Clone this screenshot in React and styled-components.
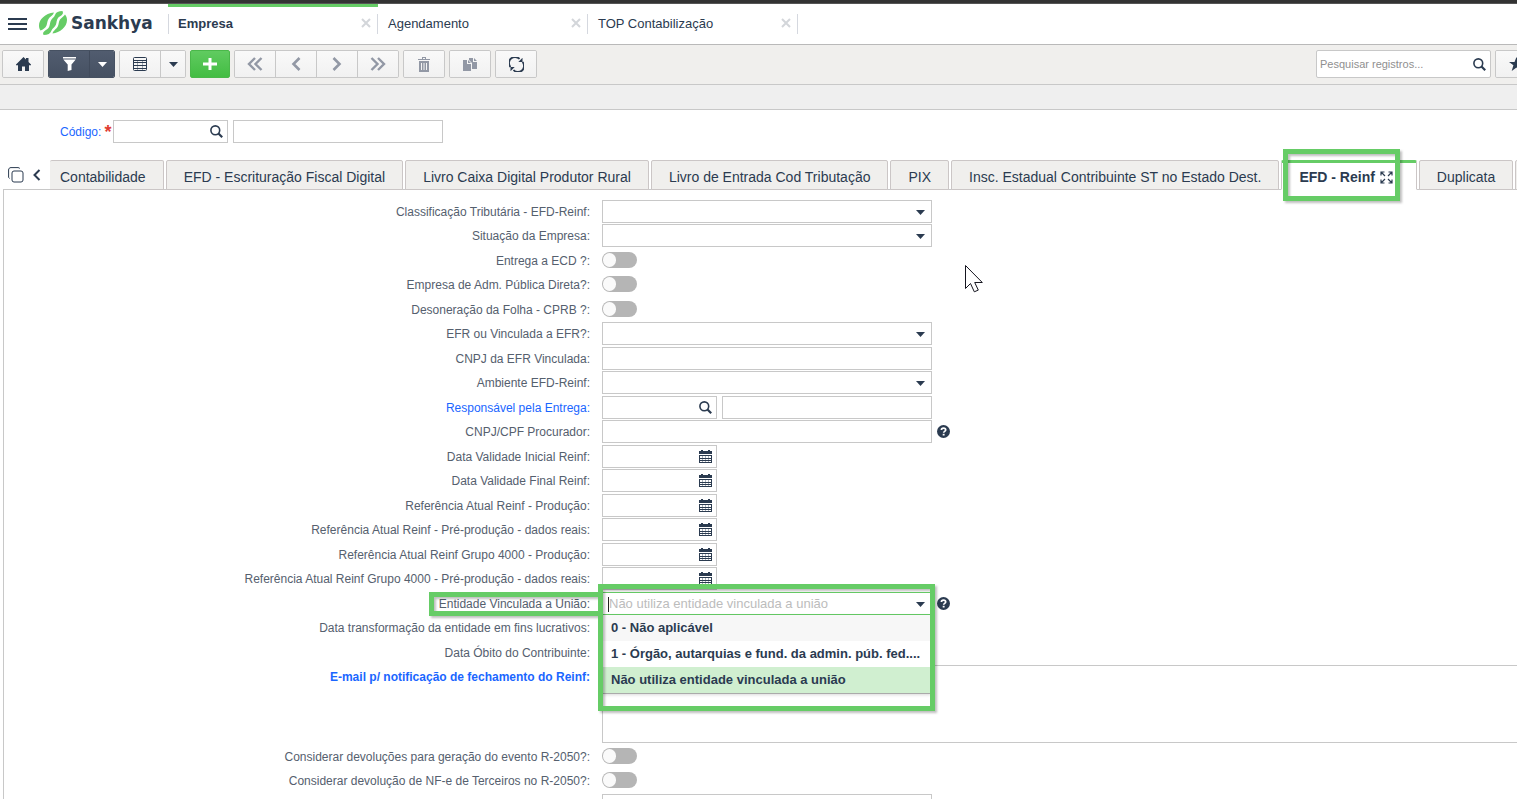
import { useState } from "react";
import styled, { createGlobalStyle, css } from "styled-components";

const NAVY = "#2b3b50";
const GREEN = "#66cc66";
const BORDER = "#c8c8c8";

const GlobalStyle = createGlobalStyle`
  * {
    box-sizing: border-box;
  }
  body {
    margin: 0;
    background-color: white;
    color: ${NAVY};
    font-family: "Liberation Sans", Arial, sans-serif;
    font-size: 12px;
  }
  button, input, select, textarea {
    font-family: inherit;
    color: inherit;
    margin: 0;
  }
`;

/* ---------- icons ---------- */

const Icon = ({ w, h, children }) => (
  <svg
    width={w}
    height={h}
    viewBox={`0 0 ${w} ${h}`}
    fill="currentColor"
    aria-hidden="true"
  >
    {children}
  </svg>
);

const MenuIcon = () => (
  <Icon w={19} h={12}>
    <path d="M0 0h19v2H0zM0 5h19v2H0zM0 10h19v2H0z" />
  </Icon>
);

const LogoMark = () => (
  <svg width="28" height="24" viewBox="0 0 28 24" fill={GREEN} aria-hidden="true">
    <path d="M15 1.5C6 2.500 0 8.500 0 14.500c0 2 .5 3.600 1.500 5 2.500-1 5-2.500 6-5 1-2.500.5-4 2-6.500C11 5.500 14 4.500 15 1.500z" />
    <path d="M23.500 0C19.500 0 17 1 16 4c-.8 2.500-3.500 3.500-4.500 6.500-.8 2.500-.5 4.500-2 6.500-1.500 2-4.500 2.500-5.500 5l.5 2C9 24 11.500 22.500 12.500 19.500c.8-2.500 3.500-3 4.500-6 .8-2.500.5-4.500 2-6.500 1.500-2 4.500-2.500 5-5z" />
    <path d="M26 3.500c-1 2-3.500 3-5 5-1.300 2-1 4-2 6.500-1.200 3-4.500 4-5.500 7.500C21 21.500 28 16 28 9c0-2-.7-4-2-5.500z" />
  </svg>
);

const CloseIcon = () => (
  <Icon w={10} h={10}>
    <path d="M1 1l8 8M9 1l-8 8" stroke="currentColor" strokeWidth="2" />
  </Icon>
);

const HomeIcon = () => (
  <Icon w={15} h={14}>
    <path d="M7.500 0L10 2.400V1h2.500v3.900L15 7.400v.9h-2V14H9V9.500H6V14H2V8.300H0v-.9z" />
  </Icon>
);

const FilterIcon = () => (
  <Icon w={13} h={14}>
    <path d="M0 0h13v1.500H0zM.3 2.500h12.400L8.500 7.500v5.500L4.700 14V7.500z" />
  </Icon>
);

const CaretIcon = () => (
  <Icon w={9} h={5}>
    <path d="M0 0h9L4.500 5z" />
  </Icon>
);

const GridIcon = () => (
  <Icon w={14} h={14}>
    <rect x=".5" y=".5" width="13" height="13" rx="1" fill="none" stroke="currentColor" />
    <path d="M1 3h12v1H1zM1 5h12v1H1zM1 8h12v1H1zM1 11h12v1H1z" />
    <path d="M4 4h1v9H4zM9 4h1v9H9z" opacity=".4" />
  </Icon>
);

const PlusIcon = () => (
  <Icon w={14} h={12}>
    <path d="M5.500 0h3v4.500H14v3H8.500V12h-3V7.500H0v-3h5.500z" />
  </Icon>
);

const DoubleChevron = () => (
  <Icon w={16} h={14}>
    <path
      d="M8 1L2 7l6 6M14.500 1l-6 6 6 6"
      fill="none"
      stroke="currentColor"
      strokeWidth="2.400"
    />
  </Icon>
);

const Chevron = () => (
  <Icon w={10} h={14}>
    <path d="M8.500 1l-6 6 6 6" fill="none" stroke="currentColor" strokeWidth="2.600" />
  </Icon>
);

const SmallChevron = () => (
  <Icon w={8} h={12}>
    <path d="M6.500 1l-5 5 5 5" fill="none" stroke="currentColor" strokeWidth="2" />
  </Icon>
);

const TrashIcon = () => (
  <Icon w={12} h={15}>
    <path d="M0 2h12v1H0zM4 0h4v2H7V1H5v1H4z" />
    <path
      fillRule="evenodd"
      d="M1 4h10v11H1zM3 6v7h1V6zM5.500 6v7h1V6zM8 6v7h1V6z"
    />
  </Icon>
);

const CopyIcon = () => (
  <Icon w={14} h={13}>
    <path d="M0 2h4v4h4v7H0zM5 2l3 3H5z" />
    <path d="M6 0h4v4h4v7H9V5L6 2zM11 0l3 3h-3z" />
  </Icon>
);

const RefreshIcon = () => (
  <Icon w={15} h={15}>
    <path
      d="M1.500 10A6 6 0 0 1 10.500 2M13.500 5A6 6 0 0 1 4.500 13"
      fill="none"
      stroke="currentColor"
      strokeWidth="1.800"
    />
    <path d="M13.500.8V5H9.300zM1.500 14.200V10h4.200z" />
  </Icon>
);

const SearchIcon = () => (
  <Icon w={13} h={13}>
    <circle cx="5.300" cy="5.300" r="4.400" fill="none" stroke="currentColor" strokeWidth="1.600" />
    <path d="M8.500 8.500l3.700 3.700" stroke="currentColor" strokeWidth="2.200" />
  </Icon>
);

const StarIcon = () => (
  <Icon w={15} h={14}>
    <path d="M7.500 0l2 5H15l-4.400 3.300L12.300 14 7.500 10.600 2.700 14l1.700-5.700L0 5h5.500z" />
  </Icon>
);

const CalendarIcon = () => (
  <Icon w={13} h={13}>
    <path d="M0 1h2V0h2v1h5V0h2v1h2v3H0z" />
    <path d="M0 5h13v1H0zM0 8h13v1H0zM0 10h13v1H0zM0 12h13v1H0z" />
    <path d="M0 5h1v8H0zM12 5h1v8h-1z" />
    <path d="M3 5h1v8H3zM6 5h1v8H6zM9 5h1v8H9z" opacity=".4" />
  </Icon>
);

const HelpIcon = () => (
  <Icon w={13} h={13}>
    <circle cx="6.500" cy="6.500" r="6.500" />
    <path
      d="M4.400 5.100c0-1.300 1-1.900 2.100-1.900s2.200.6 2.200 1.800c0 1.400-2 1.400-2 2.700"
      fill="none"
      stroke="white"
      strokeWidth="1.700"
    />
    <path d="M5.700 8.800h1.900v1.700H5.700z" fill="white" />
  </Icon>
);

const ExpandIcon = () => (
  <Icon w={13} h={13}>
    <path
      d="M1 4.500V1h3.500M8.500 1H12v3.500M12 8.500V12H8.500M4.500 12H1V8.500M1.500 1.500L5 5M11.500 1.500L8 5M11.500 11.500L8 8M1.500 11.500L5 8"
      fill="none"
      stroke="currentColor"
      strokeWidth="1.200"
    />
  </Icon>
);

const WindowsIcon = () => (
  <Icon w={16} h={16}>
    <rect x="4" y="4" width="11" height="11" rx="2" fill="none" stroke="currentColor" />
    <path
      d="M1.500 11.500C.9 11 .6 10.600.6 10V3C.6 1.500 1.500.6 3 .6h7c.9 0 1.500.4 1.900 1"
      fill="none"
      stroke="currentColor"
    />
  </Icon>
);

const PointerIcon = () => (
  <svg width="19" height="28" viewBox="0 0 19 28" aria-hidden="true">
    <path
      d="M.5.5v23l5-5 3.800 8.300 4-1.700-3.600-7.600h7.600z"
      fill="white"
      stroke="#15151f"
    />
  </svg>
);

/* ---------- data ---------- */

const windows = ["Empresa", "Agendamento", "TOP Contabilização"];

const tabs = [
  "Contabilidade",
  "EFD - Escrituração Fiscal Digital",
  "Livro Caixa Digital Produtor Rural",
  "Livro de Entrada Cod Tributação",
  "PIX",
  "Insc. Estadual Contribuinte ST no Estado Dest.",
  "EFD - Reinf",
  "Duplicata",
];

const options = [
  "0 - Não aplicável",
  "1 - Órgão, autarquias e fund. da admin. púb. fed....",
  "Não utiliza entidade vinculada a união",
];

const fields = [
  { id: "classtrib", label: "Classificação Tributária - EFD-Reinf:", type: "select" },
  { id: "situacao", label: "Situação da Empresa:", type: "select" },
  { id: "ecd", label: "Entrega a ECD ?:", type: "toggle" },
  { id: "admpub", label: "Empresa de Adm. Pública Direta?:", type: "toggle" },
  { id: "cprb", label: "Desoneração da Folha - CPRB ?:", type: "toggle" },
  { id: "efr", label: "EFR ou Vinculada a EFR?:", type: "select" },
  { id: "cnpjefr", label: "CNPJ da EFR Vinculada:", type: "text" },
  { id: "ambiente", label: "Ambiente EFD-Reinf:", type: "select" },
  { id: "resp", label: "Responsável pela Entrega:", type: "lookup", link: true },
  { id: "procurador", label: "CNPJ/CPF Procurador:", type: "text", help: true },
  { id: "valini", label: "Data Validade Inicial Reinf:", type: "date" },
  { id: "valfim", label: "Data Validade Final Reinf:", type: "date" },
  { id: "refprod", label: "Referência Atual Reinf - Produção:", type: "date" },
  { id: "refpre", label: "Referência Atual Reinf - Pré-produção - dados reais:", type: "date" },
  { id: "ref4prod", label: "Referência Atual Reinf Grupo 4000 - Produção:", type: "date" },
  { id: "ref4pre", label: "Referência Atual Reinf Grupo 4000 - Pré-produção - dados reais:", type: "date" },
  { id: "entidade", label: "Entidade Vinculada a União:", type: "combo", help: true, marked: true },
  { id: "transf", label: "Data transformação da entidade em fins lucrativos:", type: "date" },
  { id: "obito", label: "Data Óbito do Contribuinte:", type: "date" },
  { id: "email", label: "E-mail p/ notificação de fechamento do Reinf:", type: "area", link: true, strong: true },
  { id: "dev2050", label: "Considerar devoluções para geração do evento R-2050?:", type: "toggle" },
  { id: "nfe2050", label: "Considerar devolução de NF-e de Terceiros no R-2050?:", type: "toggle" },
  { id: "outro", label: "", type: "text" },
];

/* ---------- components ---------- */

const Lookup = ({ id, name }) => (
  <>
    <FieldBox $short>
      <TextInput id={id} />
      <IconButton aria-label="Pesquisar">
        <SearchIcon />
      </IconButton>
    </FieldBox>
    <FieldBox $medium>
      <TextInput aria-label={name} />
    </FieldBox>
  </>
);

const Combo = ({ id }) => {
  const [selected, setSelected] = useState(2);
  return (
    <FieldBox $open>
      <TextInput id={id} role="combobox" aria-expanded="true" placeholder={options[selected]} />
      <TextCaret />
      <SelectArrow>
        <CaretIcon />
      </SelectArrow>
      <OptionList role="listbox">
        {options.map((option, i) => (
          <Option
            key={option}
            role="option"
            aria-selected={i === selected}
            $hovered={i === 0}
            $selected={i === selected}
            onClick={() => setSelected(i)}
          >
            {option}
          </Option>
        ))}
      </OptionList>
      <ComboMarker />
    </FieldBox>
  );
};

const Control = ({ field }) => {
  const { id, label, type } = field;
  switch (type) {
    case "select":
      return (
        <FieldBox>
          <Select id={id}>
            <option value="" />
          </Select>
          <SelectArrow>
            <CaretIcon />
          </SelectArrow>
        </FieldBox>
      );
    case "toggle":
      return <Toggle id={id} type="checkbox" />;
    case "lookup":
      return <Lookup id={id} name={label} />;
    case "date":
      return (
        <FieldBox $short>
          <TextInput id={id} />
          <IconButton aria-label="Abrir calendário">
            <CalendarIcon />
          </IconButton>
        </FieldBox>
      );
    case "combo":
      return <Combo id={id} />;
    case "area":
      return <TextArea id={id} />;
    default:
      return (
        <FieldBox>
          <TextInput id={id} aria-label={label || "Campo"} />
        </FieldBox>
      );
  }
};

const App = () => {
  const [activeTab, setActiveTab] = useState("EFD - Reinf");

  return (
    <Page>
      <GlobalStyle />
      <TitleBar />
      <Header>
        <MenuButton aria-label="Menu">
          <MenuIcon />
        </MenuButton>
        <Logo href="#">
          <LogoMark />
          Sankhya
        </Logo>
        <WindowTabs>
          {windows.map((name, i) => (
            <WindowTab key={name} $active={i === 0}>
              <WindowName $active={i === 0}>{name}</WindowName>
              <CloseButton aria-label={`Fechar ${name}`}>
                <CloseIcon />
              </CloseButton>
            </WindowTab>
          ))}
        </WindowTabs>
      </Header>

      <Toolbar>
        <Group>
          <ToolButton aria-label="Início">
            <HomeIcon />
          </ToolButton>
        </Group>
        <Group $dark>
          <ToolButton $dark aria-label="Filtro">
            <FilterIcon />
          </ToolButton>
          <ToolButton $dark $narrow aria-label="Opções de filtro">
            <CaretIcon />
          </ToolButton>
        </Group>
        <Group>
          <ToolButton aria-label="Modo grade">
            <GridIcon />
          </ToolButton>
          <ToolButton $narrow aria-label="Opções da grade">
            <CaretIcon />
          </ToolButton>
        </Group>
        <AddButton aria-label="Adicionar">
          <PlusIcon />
        </AddButton>
        <Group>
          <ToolButton $muted aria-label="Primeiro">
            <DoubleChevron />
          </ToolButton>
          <ToolButton $muted aria-label="Anterior">
            <Chevron />
          </ToolButton>
          <ToolButton $muted $flip aria-label="Próximo">
            <Chevron />
          </ToolButton>
          <ToolButton $muted $flip aria-label="Último">
            <DoubleChevron />
          </ToolButton>
        </Group>
        <Group>
          <ToolButton $muted aria-label="Excluir">
            <TrashIcon />
          </ToolButton>
        </Group>
        <Group>
          <ToolButton $muted aria-label="Duplicar">
            <CopyIcon />
          </ToolButton>
        </Group>
        <Group>
          <ToolButton aria-label="Atualizar">
            <RefreshIcon />
          </ToolButton>
        </Group>
        <ToolbarEnd>
          <SearchBox>
            <SearchInput aria-label="Pesquisar registros" placeholder="Pesquisar registros..." />
            <IconButton aria-label="Pesquisar">
              <SearchIcon />
            </IconButton>
          </SearchBox>
          <Group>
            <ToolButton aria-label="Favoritos">
              <StarIcon />
            </ToolButton>
          </Group>
        </ToolbarEnd>
      </Toolbar>
      <SubBar />

      <KeyRow>
        <KeyLabel htmlFor="codigo">Código:</KeyLabel>
        <Required>*</Required>
        <Lookup id="codigo" name="Nome" />
      </KeyRow>

      <TabBar>
        <TabTools>
          <IconButton aria-label="Abas">
            <WindowsIcon />
          </IconButton>
          <IconButton aria-label="Abas anteriores">
            <SmallChevron />
          </IconButton>
        </TabTools>
        <Tabs role="tablist">
          {tabs.map((tab, i) => (
            <Tab
              key={tab}
              role="tab"
              aria-selected={tab === activeTab}
              $active={tab === activeTab}
              $first={i === 0}
              onClick={() => setActiveTab(tab)}
            >
              {tab}
              {tab === activeTab && <ExpandIcon />}
              {tab === activeTab && <TabMarker />}
            </Tab>
          ))}
          <Tab role="tab" aria-label="Próxima aba" />
        </Tabs>
      </TabBar>

      <Panel>
        {fields.map((field) => (
          <Row key={field.id}>
            <LabelCell>
              <Label htmlFor={field.id} $link={field.link} $strong={field.strong}>
                {field.label}
                {field.marked && <LabelMarker />}
              </Label>
            </LabelCell>
            <Control field={field} />
            {field.help && (
              <IconButton aria-label="Ajuda">
                <HelpIcon />
              </IconButton>
            )}
          </Row>
        ))}
      </Panel>
      <Pointer>
        <PointerIcon />
      </Pointer>
    </Page>
  );
};

/* ---------- styles ---------- */

const Page = styled.div`
  position: relative;
  display: flex;
  flex-direction: column;
  height: 100vh;
  overflow: hidden;
`;

const TitleBar = styled.div`
  flex: none;
  height: 4px;
  background-color: #333;
  border-bottom: 1px solid #555;
`;

const Header = styled.header`
  flex: none;
  display: flex;
  height: 41px;
  border-bottom: 1px solid #b9b9b9;
`;

const plainButton = css`
  display: flex;
  align-items: center;
  justify-content: center;
  padding: 0;
  border: 0;
  background: none;
  cursor: pointer;
`;

const MenuButton = styled.button`
  ${plainButton}
  width: 35px;
`;

const Logo = styled.a`
  display: flex;
  align-items: center;
  gap: 4px;
  width: 133px;
  padding: 0 0 2px 4px;
  color: ${NAVY};
  font-family: "DejaVu Sans", sans-serif;
  font-size: 17px;
  font-weight: bold;
  text-decoration: none;
`;

const WindowTabs = styled.nav`
  display: flex;
`;

const tabDivider = "linear-gradient(#d5d8df, #d5d8df)";

const WindowTab = styled.div`
  display: flex;
  align-items: center;
  justify-content: space-between;
  width: 210px;
  padding: 0 7px 5px 10px;
  border-top: 3px solid ${(props) => (props.$active ? GREEN : "transparent")};
  background: ${tabDivider} right 0 top 7px / 1px 20px no-repeat;
  ${(props) =>
    props.$active &&
    css`
      background:
        ${tabDivider} left 0 top 7px / 1px 20px no-repeat,
        ${tabDivider} right 0 top 7px / 1px 20px no-repeat;
    `}
`;

const WindowName = styled.span`
  font-size: 13px;
  font-weight: ${(props) => (props.$active ? "bold" : "normal")};
`;

const CloseButton = styled.button`
  ${plainButton}
  && {
    color: #d3d6da;
  }
`;

const Toolbar = styled.div`
  flex: none;
  display: flex;
  gap: 4px;
  height: 40px;
  padding: 5px 0 0 2px;
  background-color: #f0efed;
  border-bottom: 1px solid ${BORDER};
`;

const Group = styled.div`
  display: flex;
  height: 28px;
  border: 1px solid ${(props) => (props.$dark ? "#465162" : BORDER)};
  border-radius: 2px;
  overflow: hidden;
  > button + button {
    box-sizing: content-box;
    border-left: 1px solid ${(props) => (props.$dark ? "#414b5c" : BORDER)};
  }
`;

const ToolButton = styled.button`
  ${plainButton}
  width: ${(props) => (props.$narrow ? "24px" : "40px")};
  background: ${(props) =>
    props.$dark
      ? "linear-gradient(#515c6f, #465162)"
      : "linear-gradient(#f9f9f9, #f1f1f1)"};
  && {
    color: ${(props) => (props.$dark ? "white" : props.$muted ? "#9298a5" : NAVY)};
  }
  svg {
    transform: ${(props) => (props.$flip ? "rotate(180deg)" : "none")};
  }
`;

const AddButton = styled.button`
  ${plainButton}
  width: 40px;
  height: 28px;
  border: 1px solid #4ab84a;
  border-radius: 2px;
  background: linear-gradient(#60cb60, #43bd43);
  && {
    color: white;
  }
`;

const ToolbarEnd = styled.div`
  display: flex;
  gap: 4px;
  margin-left: auto;
  margin-right: -20px;
`;

const SearchBox = styled.div`
  display: flex;
  width: 175px;
  height: 28px;
  border: 1px solid ${BORDER};
  border-radius: 2px;
  background-color: white;
`;

const SearchInput = styled.input`
  flex: 1;
  min-width: 0;
  padding: 0 3px;
  border: 0;
  outline: none;
  background: none;
  font-size: 11px;
  &::placeholder {
    color: #8f8f8f;
  }
`;

const SubBar = styled.div`
  flex: none;
  height: 25px;
  background-color: #efefef;
  border-bottom: 1px solid ${BORDER};
`;

const KeyRow = styled.div`
  flex: none;
  display: flex;
  align-items: center;
  height: 50px;
  padding: 0 0 7px 60px;
`;

const KeyLabel = styled.label`
  color: #1a66ff;
`;

const Required = styled.span`
  width: 12px;
  height: 16px;
  padding-left: 3px;
  color: #e03c31;
  font-size: 18px;
  font-weight: bold;
  line-height: 16px;
`;

const TabBar = styled.div`
  flex: none;
  display: flex;
  height: 30px;
`;

const TabTools = styled.div`
  flex: none;
  display: flex;
  align-items: center;
  width: 50px;
  padding-left: 5px;
`;

const Tabs = styled.div`
  display: flex;
  gap: 2px;
  height: 30px;
`;

const Tab = styled.button`
  ${plainButton}
  position: relative;
  flex: none;
  gap: 5px;
  height: 30px;
  padding: 4px 17px 0;
  border: 1px solid #cbc6c6;
  border-radius: 2px 2px 0 0;
  background-color: #f0efed;
  font-size: 14px;
  ${(props) =>
    props.$first &&
    css`
      padding-left: 10px;
      border-left: 0;
    `}
  ${(props) =>
    props.$active &&
    css`
      padding: 2px 23px 0 17px;
      border-top: 3px solid ${GREEN};
      border-bottom-color: white;
      background-color: white;
      font-weight: bold;
      z-index: 1;
    `}
`;

const marker = css`
  position: absolute;
  border: 5px solid ${GREEN};
  filter: drop-shadow(2px 2px 1px rgba(0, 0, 0, 0.25));
  pointer-events: none;
`;

const TabMarker = styled.span`
  ${marker}
  inset: -14px 16px -12px 1px;
`;

const Panel = styled.form`
  flex: 1;
  min-height: 0;
  margin: -1px 0 0 3px;
  padding-top: 10px;
  border: solid ${BORDER};
  border-width: 1px 0 0 1px;
`;

const Row = styled.div`
  display: flex;
  align-items: flex-start;
  min-height: 24px;
  &:nth-child(even) {
    min-height: 25px;
  }
`;

const LabelCell = styled.div`
  flex: none;
  width: 598px;
  padding: 1px 12px 0 0;
  text-align: right;
`;

const Label = styled.label`
  position: relative;
  line-height: 23px;
  color: ${(props) => (props.$link ? "#1a66ff" : "#55606e")};
  font-weight: ${(props) => (props.$strong ? "bold" : "normal")};
`;

const LabelMarker = styled.span`
  ${marker}
  inset: -5px -13px -5px -10px;
`;

const FieldBox = styled.div`
  position: relative;
  flex: none;
  display: flex;
  width: ${(props) => (props.$short ? "115px" : props.$medium ? "210px" : "330px")};
  height: 23px;
  margin-left: ${(props) => (props.$medium ? "5px" : "0")};
  border: 1px solid ${(props) => (props.$open ? GREEN : BORDER)};
  background-color: white;
`;

const TextInput = styled.input`
  flex: 1;
  min-width: 0;
  padding: 0 6px;
  border: 0;
  outline: none;
  background: none;
  font-size: 13px;
  &::placeholder {
    color: #bcbcbc;
  }
`;

const TextCaret = styled.span`
  position: absolute;
  left: 5px;
  top: 4px;
  width: 1px;
  height: 15px;
  background-color: #222;
`;

const Select = styled.select`
  flex: 1;
  appearance: none;
  padding: 0 24px 0 6px;
  border: 0;
  outline: none;
  background: none;
  font-size: 13px;
`;

const SelectArrow = styled.span`
  position: absolute;
  right: 6px;
  top: 9px;
  display: flex;
  pointer-events: none;
`;

const IconButton = styled.button.attrs({ type: "button" })`
  ${plainButton}
  width: 21px;
  height: 23px;
  align-self: center;
  ${Row} > & {
    align-self: flex-start;
    width: 23px;
  }
`;

const Toggle = styled.input`
  appearance: none;
  width: 35px;
  height: 16px;
  && {
    margin: 3px 0 0;
  }
  padding: 1px;
  border-radius: 8px;
  background-color: #b5b5b5;
  cursor: pointer;
  &::before {
    content: "";
    display: block;
    width: 13px;
    height: 14px;
    border-radius: 7px;
    background-color: #fafafa;
  }
  &:checked {
    background-color: ${GREEN};
  }
  &:checked::before {
    margin-left: auto;
  }
`;

const TextArea = styled.textarea`
  flex: 1;
  height: 78px;
  && {
    margin-bottom: 2px;
  }
  padding: 4px 6px;
  border: solid ${BORDER};
  border-width: 1px 0 1px 1px;
  outline: none;
  resize: none;
`;

const OptionList = styled.ul`
  position: absolute;
  z-index: 2;
  top: 22px;
  left: 0;
  right: 0;
  margin: 0;
  padding: 0;
  border-bottom: 1px solid #aaa;
  background-color: white;
  box-shadow: 0 1px 3px rgba(0, 0, 0, 0.15);
  list-style: none;
`;

const Option = styled.li`
  height: 26px;
  padding: 0 8px;
  overflow: hidden;
  line-height: 26px;
  font-size: 13px;
  font-weight: bold;
  white-space: nowrap;
  cursor: pointer;
  background-color: ${(props) =>
    props.$selected ? "#d0efd0" : props.$hovered ? "#f7f7f7" : "white"};
`;

const ComboMarker = styled.span`
  ${marker}
  z-index: 3;
  inset: -9px -4px -97px -5px;
`;

const Pointer = styled.span`
  position: absolute;
  left: 965px;
  top: 265px;
  pointer-events: none;
`;

export default App;
